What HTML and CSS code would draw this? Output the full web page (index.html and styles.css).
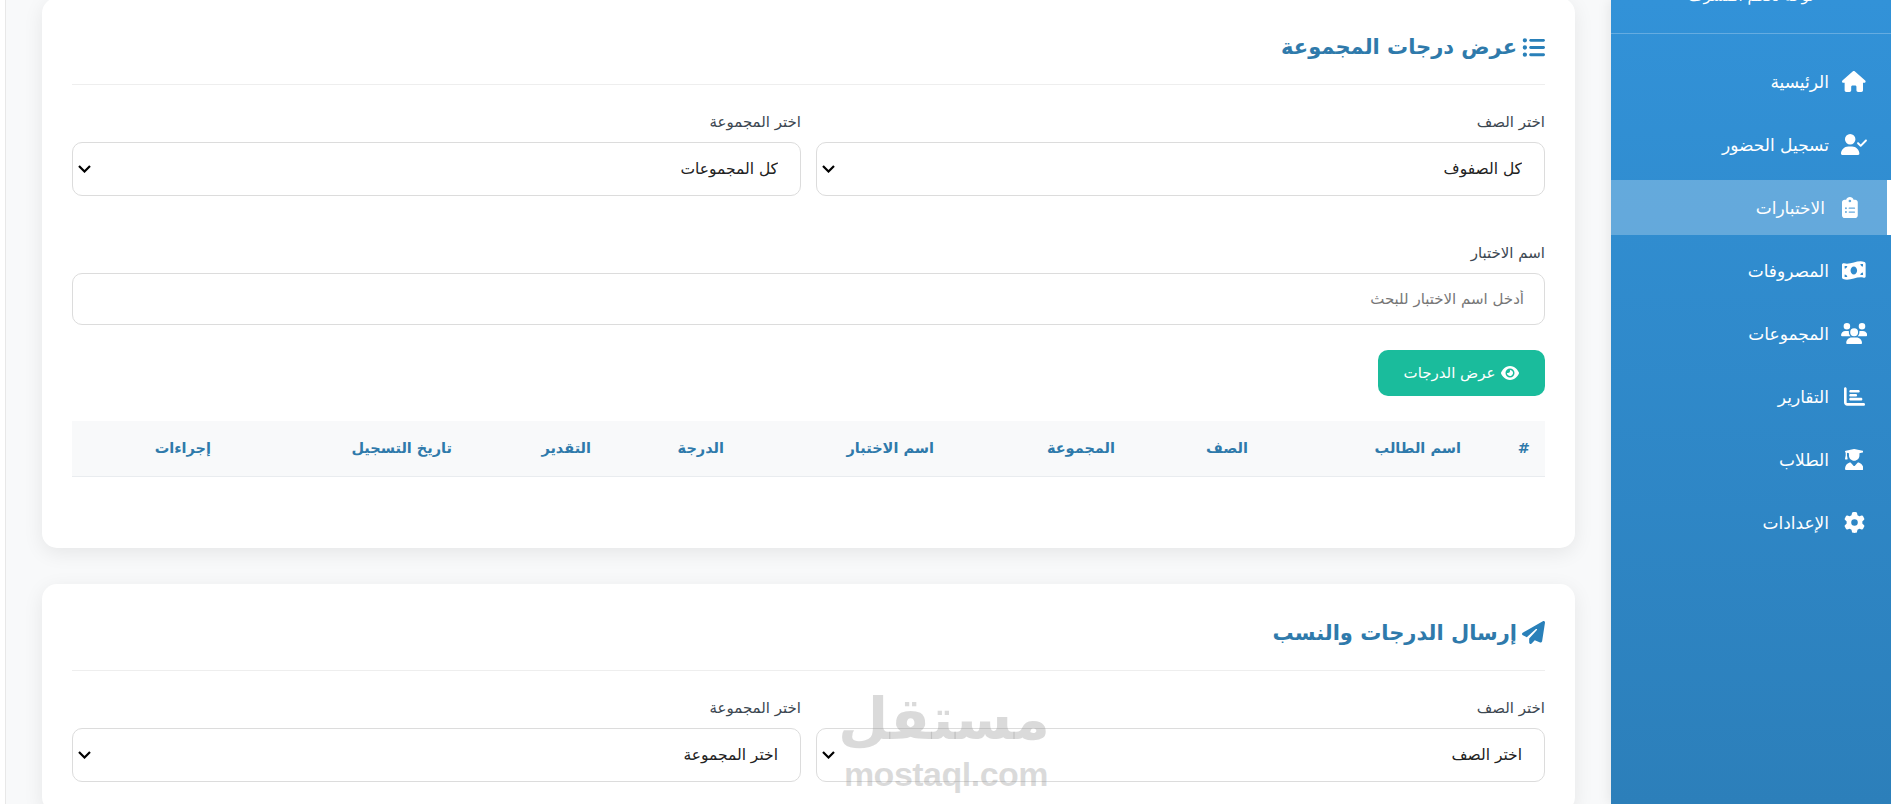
FILE: index.html
```html
<!DOCTYPE html>
<html lang="ar" dir="rtl">
<head>
    <meta charset="UTF-8">
    <meta name="viewport" content="width=device-width, initial-scale=1.0">
    <title>الاختبارات</title>
    <link rel="stylesheet" href="styles.css">
</head>
<body>

<!-- القائمة الجانبية -->
<aside class="sidebar">
    <div class="brand"><span class="brand-text">لوحة تحكم المشرف</span></div>
    <nav class="nav">
        <a class="nav-link">
            <span class="nav-icon"><svg class="icon" viewBox="0 0 576 512"><path d="M575.8 255.5c0 18-15 32.1-32 32.1h-32l.7 160.2c0 2.7-.2 5.4-.5 8.1V472c0 22.1-17.9 40-40 40H456c-1.1 0-2.2 0-3.3-.1c-1.4 .1-2.8 .1-4.2 .1H416 392c-22.1 0-40-17.9-40-40V448 384c0-17.7-14.3-32-32-32H256c-17.7 0-32 14.3-32 32v64 24c0 22.1-17.9 40-40 40H160 128.1c-1.5 0-3-.1-4.5-.2c-1.2 .1-2.4 .2-3.6 .2H104c-22.1 0-40-17.9-40-40V360c0-.9 0-1.9 .1-2.8V287.6H32c-18 0-32-14-32-32.1c0-9 3-17 10-24L266.4 8c7-7 15-8 22-8s15 2 21 7L564.8 231.5c8 7 12 15 11 24z"/></svg></span>
            الرئيسية
        </a>
        <a class="nav-link">
            <span class="nav-icon"><svg class="icon" viewBox="0 0 640 512"><path d="M96 128a128 128 0 1 1 256 0A128 128 0 1 1 96 128zM0 482.3C0 383.8 79.8 304 178.3 304h91.4C368.2 304 448 383.8 448 482.3c0 16.4-13.3 29.7-29.7 29.7H29.7C13.3 512 0 498.7 0 482.3zM625 177L497 305c-9.4 9.4-24.6 9.4-33.9 0l-64-64c-9.4-9.4-9.4-24.6 0-33.9s24.6-9.4 33.9 0l47 47L591 143c9.4-9.4 24.6-9.4 33.9 0s9.4 24.6 0 33.9z"/></svg></span>
            تسجيل الحضور
        </a>
        <a class="nav-link active">
            <span class="nav-icon"><svg class="icon" viewBox="0 0 384 512"><path d="M192 0c-41.8 0-77.4 26.7-90.5 64H64C28.7 64 0 92.7 0 128V448c0 35.3 28.7 64 64 64H320c35.3 0 64-28.7 64-64V128c0-35.3-28.7-64-64-64H282.5C269.4 26.7 233.8 0 192 0zm0 64a32 32 0 1 1 0 64 32 32 0 1 1 0-64zM72 272a24 24 0 1 1 48 0 24 24 0 1 1 -48 0zm104-16H304c8.8 0 16 7.2 16 16s-7.2 16-16 16H176c-8.8 0-16-7.2-16-16s7.2-16 16-16zM72 368a24 24 0 1 1 48 0 24 24 0 1 1 -48 0zm88 0c0-8.8 7.2-16 16-16H304c8.8 0 16 7.2 16 16s-7.2 16-16 16H176c-8.8 0-16-7.2-16-16z"/></svg></span>
            الاختبارات
        </a>
        <a class="nav-link">
            <span class="nav-icon"><svg class="icon" viewBox="0 0 576 512"><path d="M0 112.5V422.3c0 18 10.1 35 27 41.3c87 32.5 174 10.3 261-11.9c79.8-20.3 159.6-40.7 239.3-18.9c23 6.3 48.7-9.5 48.7-33.4V89.7c0-18-10.1-35-27-41.3C462 15.9 375 38.1 288 60.3C208.2 80.6 128.4 100.9 48.7 79.1C25.6 72.8 0 88.6 0 112.5zM288 352c-44.2 0-80-43-80-96s35.8-96 80-96s80 43 80 96s-35.8 96-80 96zM64 352c35.3 0 64 28.7 64 64H64V352zm64-208c0 35.3-28.7 64-64 64V144h64zM512 304v64H448c0-35.3 28.7-64 64-64zM448 96h64v64c-35.3 0-64-28.7-64-64z"/></svg></span>
            المصروفات
        </a>
        <a class="nav-link">
            <span class="nav-icon"><svg class="icon" viewBox="0 0 640 512"><path d="M144 0a80 80 0 1 1 0 160A80 80 0 1 1 144 0zM512 0a80 80 0 1 1 0 160A80 80 0 1 1 512 0zM0 298.7C0 239.8 47.8 192 106.7 192h42.7c15.9 0 31 3.5 44.6 9.7c-1.3 7.2-1.9 14.7-1.9 22.3c0 38.2 16.8 72.5 43.3 96c-.2 0-.4 0-.7 0H21.3C9.6 320 0 310.4 0 298.7zM405.3 320c-.2 0-.4 0-.7 0c26.6-23.5 43.3-57.8 43.3-96c0-7.6-.7-15-1.9-22.3c13.6-6.3 28.7-9.7 44.6-9.7h42.7C592.2 192 640 239.8 640 298.7c0 11.8-9.6 21.3-21.3 21.3H405.3zM224 224a96 96 0 1 1 192 0 96 96 0 1 1 -192 0zM128 485.3C128 411.7 187.7 352 261.3 352H378.7C452.3 352 512 411.7 512 485.3c0 14.7-11.9 26.7-26.7 26.7H154.7c-14.7 0-26.7-11.9-26.7-26.7z"/></svg></span>
            المجموعات
        </a>
        <a class="nav-link">
            <span class="nav-icon"><svg class="icon" viewBox="0 0 512 512"><path d="M32 32c17.7 0 32 14.3 32 32V400c0 8.8 7.2 16 16 16H480c17.7 0 32 14.3 32 32s-14.3 32-32 32H80c-44.2 0-80-35.8-80-80V64C0 46.3 14.3 32 32 32zm96 96c0-17.7 14.3-32 32-32l192 0c17.7 0 32 14.3 32 32s-14.3 32-32 32l-192 0c-17.7 0-32-14.3-32-32zm32 64H288c17.7 0 32 14.3 32 32s-14.3 32-32 32H160c-17.7 0-32-14.3-32-32s14.3-32 32-32zm0 96H416c17.7 0 32 14.3 32 32s-14.3 32-32 32H160c-17.7 0-32-14.3-32-32s14.3-32 32-32z"/></svg></span>
            التقارير
        </a>
        <a class="nav-link">
            <span class="nav-icon"><svg class="icon" viewBox="0 0 448 512"><path d="M219.3 .5c3.1-.6 6.3-.6 9.4 0l200 40C439.9 42.7 448 52.6 448 64s-8.1 21.3-19.3 23.5L352 102.9V160c0 70.7-57.3 128-128 128s-128-57.3-128-128V102.9L48 93.3v65.1l15.7 78.4c.9 4.7-.3 9.6-3.3 13.3s-7.6 5.9-12.4 5.9H16c-4.8 0-9.3-2.1-12.4-5.9s-4.3-8.6-3.3-13.3L16 158.4V86.6C6.5 83.3 0 74.3 0 64C0 52.6 8.1 42.7 19.3 40.5l200-40zM111.9 327.7c10.5-3.4 21.8 .4 29.4 8.5l71 75.5c6.3 6.7 17 6.7 23.3 0l71-75.5c7.6-8.1 18.9-11.9 29.4-8.5C401 348.6 448 409.4 448 481.3c0 17-13.8 30.7-30.7 30.7H30.7C13.8 512 0 498.2 0 481.3c0-71.9 47-132.7 111.9-153.6z"/></svg></span>
            الطلاب
        </a>
        <a class="nav-link">
            <span class="nav-icon"><svg class="icon" viewBox="0 0 512 512"><path d="M495.9 166.6c3.2 8.7 .5 18.4-6.4 24.6l-43.3 39.4c1.1 8.3 1.7 16.8 1.7 25.4s-.6 17.1-1.7 25.4l43.3 39.4c6.9 6.2 9.6 15.9 6.4 24.6c-4.4 11.9-9.7 23.3-15.8 34.3l-4.7 8.1c-6.6 11-14 21.4-22.1 31.2c-5.9 7.2-15.7 9.6-24.5 6.8l-55.7-17.7c-13.4 10.3-28.2 18.9-44 25.4l-12.5 57.1c-2 9.1-9 16.3-18.2 17.8c-13.8 2.3-28 3.5-42.5 3.5s-28.7-1.2-42.5-3.5c-9.2-1.5-16.2-8.7-18.2-17.8l-12.5-57.1c-15.8-6.5-30.6-15.1-44-25.4L83.1 425.9c-8.8 2.8-18.6 .3-24.5-6.8c-8.1-9.8-15.5-20.2-22.1-31.2l-4.7-8.1c-6.1-11-11.4-22.4-15.8-34.3c-3.2-8.7-.5-18.4 6.4-24.6l43.3-39.4C64.6 273.1 64 264.6 64 256s.6-17.1 1.7-25.4L22.4 191.2c-6.9-6.2-9.6-15.9-6.4-24.6c4.4-11.9 9.7-23.3 15.8-34.3l4.7-8.1c6.6-11 14-21.4 22.1-31.2c5.9-7.2 15.7-9.6 24.5-6.8l55.7 17.7c13.4-10.3 28.2-18.9 44-25.4l12.5-57.1c2-9.1 9-16.3 18.2-17.8C227.3 1.2 241.5 0 256 0s28.7 1.2 42.5 3.5c9.2 1.5 16.2 8.7 18.2 17.8l12.5 57.1c15.8 6.5 30.6 15.1 44 25.4l55.7-17.7c8.8-2.8 18.6-.3 24.5 6.8c8.1 9.8 15.5 20.2 22.1 31.2l4.7 8.1c6.1 11 11.4 22.4 15.8 34.3zM256 336a80 80 0 1 0 0-160 80 80 0 1 0 0 160z"/></svg></span>
            الإعدادات
        </a>
    </nav>
</aside>

<!-- المحتوى -->
<main class="main">

    <section class="card">
        <h2 class="card-title">
            <svg class="title-icon" viewBox="0 0 512 512"><path d="M64 144a48 48 0 1 0 0-96 48 48 0 1 0 0 96zM192 64c-17.7 0-32 14.3-32 32s14.3 32 32 32H480c17.7 0 32-14.3 32-32s-14.3-32-32-32H192zm0 160c-17.7 0-32 14.3-32 32s14.3 32 32 32H480c17.7 0 32-14.3 32-32s-14.3-32-32-32H192zm0 160c-17.7 0-32 14.3-32 32s14.3 32 32 32H480c17.7 0 32-14.3 32-32s-14.3-32-32-32H192zM64 464a48 48 0 1 0 0-96 48 48 0 1 0 0 96zm48-208a48 48 0 1 0 -96 0 48 48 0 1 0 96 0z"/></svg>
            عرض درجات المجموعة
        </h2>
        <div class="form-row">
            <div>
                <label class="form-label">اختر الصف</label>
                <select class="form-select"><option>كل الصفوف</option></select>
            </div>
            <div>
                <label class="form-label">اختر المجموعة</label>
                <select class="form-select"><option>كل المجموعات</option></select>
            </div>
        </div>
        <div class="form-group">
            <label class="form-label">اسم الاختبار</label>
            <input class="form-input" type="text" placeholder="أدخل اسم الاختبار للبحث">
        </div>
        <button class="btn-show">
            <svg class="btn-icon" viewBox="0 0 576 512"><path d="M288 32c-80.8 0-145.5 36.8-192.6 80.6C48.6 156 17.3 208 2.5 243.7c-3.3 7.9-3.3 16.7 0 24.6C17.3 304 48.6 356 95.4 399.4C142.5 443.2 207.2 480 288 480s145.5-36.8 192.6-80.6c46.8-43.5 78.1-95.4 93-131.1c3.3-7.9 3.3-16.7 0-24.6c-14.9-35.7-46.2-87.7-93-131.1C433.5 68.8 368.8 32 288 32zM144 256a144 144 0 1 1 288 0 144 144 0 1 1 -288 0zm144-64c0 35.3-28.7 64-64 64c-7.1 0-13.9-1.2-20.3-3.3c-5.5-1.8-11.9 1.6-11.7 7.4c.3 6.9 1.3 13.8 3.2 20.7c13.7 51.2 66.4 81.6 117.6 67.9s81.6-66.4 67.9-117.6c-11.1-41.5-47.8-69.4-88.6-71.1c-5.8-.2-9.2 6.1-7.4 11.7c2.1 6.4 3.3 13.2 3.3 20.3z"/></svg>
            عرض الدرجات
        </button>
        <table class="grades">
            <thead>
                <tr>
                    <th>#</th>
                    <th>اسم الطالب</th>
                    <th>الصف</th>
                    <th>المجموعة</th>
                    <th>اسم الاختبار</th>
                    <th>الدرجة</th>
                    <th>التقدير</th>
                    <th>تاريخ التسجيل</th>
                    <th>إجراءات</th>
                </tr>
            </thead>
        </table>
    </section>

    <section class="card">
        <h2 class="card-title">
            <svg class="title-icon" viewBox="0 0 512 512"><path d="M498.1 5.6c10.1 7 15.4 19.1 13.5 31.2l-64 416c-1.5 9.7-7.4 18.2-16 23s-18.9 5.4-28 1.6L284 427.7l-68.5 74.1c-8.9 9.7-22.9 12.9-35.2 8.1S160 493.2 160 480V396.4c0-4 1.5-7.8 4.2-10.7L331.8 202.8c5.8-6.3 5.6-16-.4-22s-15.7-6.4-22-.7L106 360.8 17.7 316.6C7.1 311.3 .3 300.7 0 288.9s5.9-22.8 16.1-28.7l448-256c10.7-6.1 23.9-5.5 34 1.4z"/></svg>
            إرسال الدرجات والنسب
        </h2>
        <div class="form-row">
            <div>
                <label class="form-label">اختر الصف</label>
                <select class="form-select"><option>اختر الصف</option></select>
            </div>
            <div>
                <label class="form-label">اختر المجموعة</label>
                <select class="form-select"><option>اختر المجموعة</option></select>
            </div>
        </div>
    </section>

</main>

<!-- العلامة المائية -->
<div class="watermark">
    <div class="wm-ar">مستقل</div>
    <div class="wm-en" dir="ltr">mostaql.com</div>
</div>

</body>
</html>
```

FILE: styles.css
```css
* {
    box-sizing: border-box;
}
html, body {
    height: 100%;
    overflow: hidden;
}
body {
    margin: 0;
    display: flex;
    background-color: #fff;
    font-family: "DejaVu Sans", sans-serif;
    color: #333;
}

/* القائمة الجانبية */
.sidebar {
    width: 280px;
    flex-shrink: 0;
    background: linear-gradient(180deg, #3292d8, #2c7fba);
    color: #fff;
    box-shadow: -2px 0 12px rgba(0, 0, 0, 0.08);
    position: relative;
    z-index: 1;
}
.brand {
    height: 34px;
    border-bottom: 1px solid rgba(255, 255, 255, 0.25);
    overflow: hidden;
    text-align: center;
}
.brand-text {
    display: block;
    margin-top: -14px;
    font-size: 15px;
    line-height: 20px;
}
.nav {
    padding-top: 20px;
}
.nav-link {
    display: flex;
    align-items: center;
    gap: 10px;
    height: 55px;
    margin-bottom: 8px;
    padding-right: 22px;
    font-size: 17px;
    color: #fff;
}
.nav-link.active {
    background-color: rgba(255, 255, 255, 0.25);
    border-right: 4px solid #fff;
}
.nav-icon {
    width: 30px;
    display: flex;
    justify-content: center;
}
.icon {
    height: 21px;
    fill: #fff;
    display: block;
}

/* المحتوى */
.main {
    flex: 1;
    min-width: 0;
    margin-top: -2px;
    margin-left: 5px;
    padding: 0 36px 0 36px;
    background-color: #f8f9fa;
    border-left: 1px solid #e8e8e8;
}
.card {
    background-color: #fff;
    border-radius: 15px;
    padding: 30px;
    margin-bottom: 36px;
    box-shadow: 0 5px 20px rgba(0, 0, 0, 0.08);
}
.card-title {
    display: flex;
    align-items: center;
    gap: 5px;
    margin: 0 0 25px;
    height: 57px;
    padding-bottom: 18px;
    border-bottom: 1px solid #eee;
    font-size: 21px;
    line-height: 38px;
    font-weight: bold;
    color: #2f7aab;
}
.title-icon {
    height: 23px;
    fill: #2980b9;
    flex-shrink: 0;
}

.form-row {
    display: grid;
    grid-template-columns: 1fr 1fr;
    gap: 15px;
}
.form-group {
    margin-top: 45px;
    margin-bottom: 25px;
}
.form-label {
    display: block;
    margin-bottom: 8px;
    font-size: 15px;
    line-height: 24px;
    color: #3d4852;
}
.form-select, .form-input {
    display: block;
    width: 100%;
    background-color: #fff;
    border: 1px solid #dcdcdc;
    border-radius: 10px;
    font-family: inherit;
    font-size: 15.5px;
    color: #222;
}
.form-select {
    height: 54px;
    padding: 0 22px;
    appearance: none;
    background-image: url("data:image/svg+xml,%3Csvg xmlns='http://www.w3.org/2000/svg' viewBox='0 0 13 8'%3E%3Cpath d='M1 1l5.5 5.5L12 1' fill='none' stroke='%23000' stroke-width='2.2'/%3E%3C/svg%3E");
    background-repeat: no-repeat;
    background-position: left 5px center;
    background-size: 13px 8px;
}
.form-input {
    height: 52px;
    padding: 0 20px;
    outline: none;
    font-size: 15px;
}
.form-input::placeholder {
    color: #777;
}

.btn-show {
    display: flex;
    align-items: center;
    justify-content: center;
    gap: 6px;
    width: 167px;
    height: 46px;
    border: none;
    border-radius: 10px;
    background-color: #1abc9c;
    font-family: inherit;
    font-size: 15px;
    color: #fff;
}
.btn-icon {
    height: 16px;
    fill: #fff;
}

.grades {
    width: 100%;
    margin-top: 25px;
    margin-bottom: 41px;
    border-collapse: collapse;
    table-layout: fixed;
}
.grades th {
    height: 55px;
    padding: 0 15px;
    background-color: #f8f9fa;
    border-bottom: 1px solid #e9ecef;
    text-align: right;
    font-size: 14.5px;
    font-weight: bold;
    color: #2f7aab;
}
.grades th:nth-child(1) { width: 69px; }
.grades th:nth-child(2) { width: 213px; }
.grades th:nth-child(3) { width: 133px; }
.grades th:nth-child(4) { width: 181px; }
.grades th:nth-child(5) { width: 210px; }
.grades th:nth-child(6) { width: 133px; }
.grades th:nth-child(7) { width: 139px; }
.grades th:nth-child(8) { width: 241px; }
.grades th:nth-child(9) { width: 154px; }

/* العلامة المائية فوق الصفحة */
.watermark {
    position: absolute;
    left: 842px;
    top: 682px;
    width: 208px;
    text-align: center;
    pointer-events: none;
    color: rgba(150, 150, 150, 0.35);
}
.wm-ar {
    font-size: 58px;
    line-height: 74px;
    font-weight: bold;
}
.wm-en {
    font-family: "Liberation Sans", sans-serif;
    font-size: 34px;
    line-height: 36px;
    font-weight: bold;
    letter-spacing: -0.5px;
}
```
